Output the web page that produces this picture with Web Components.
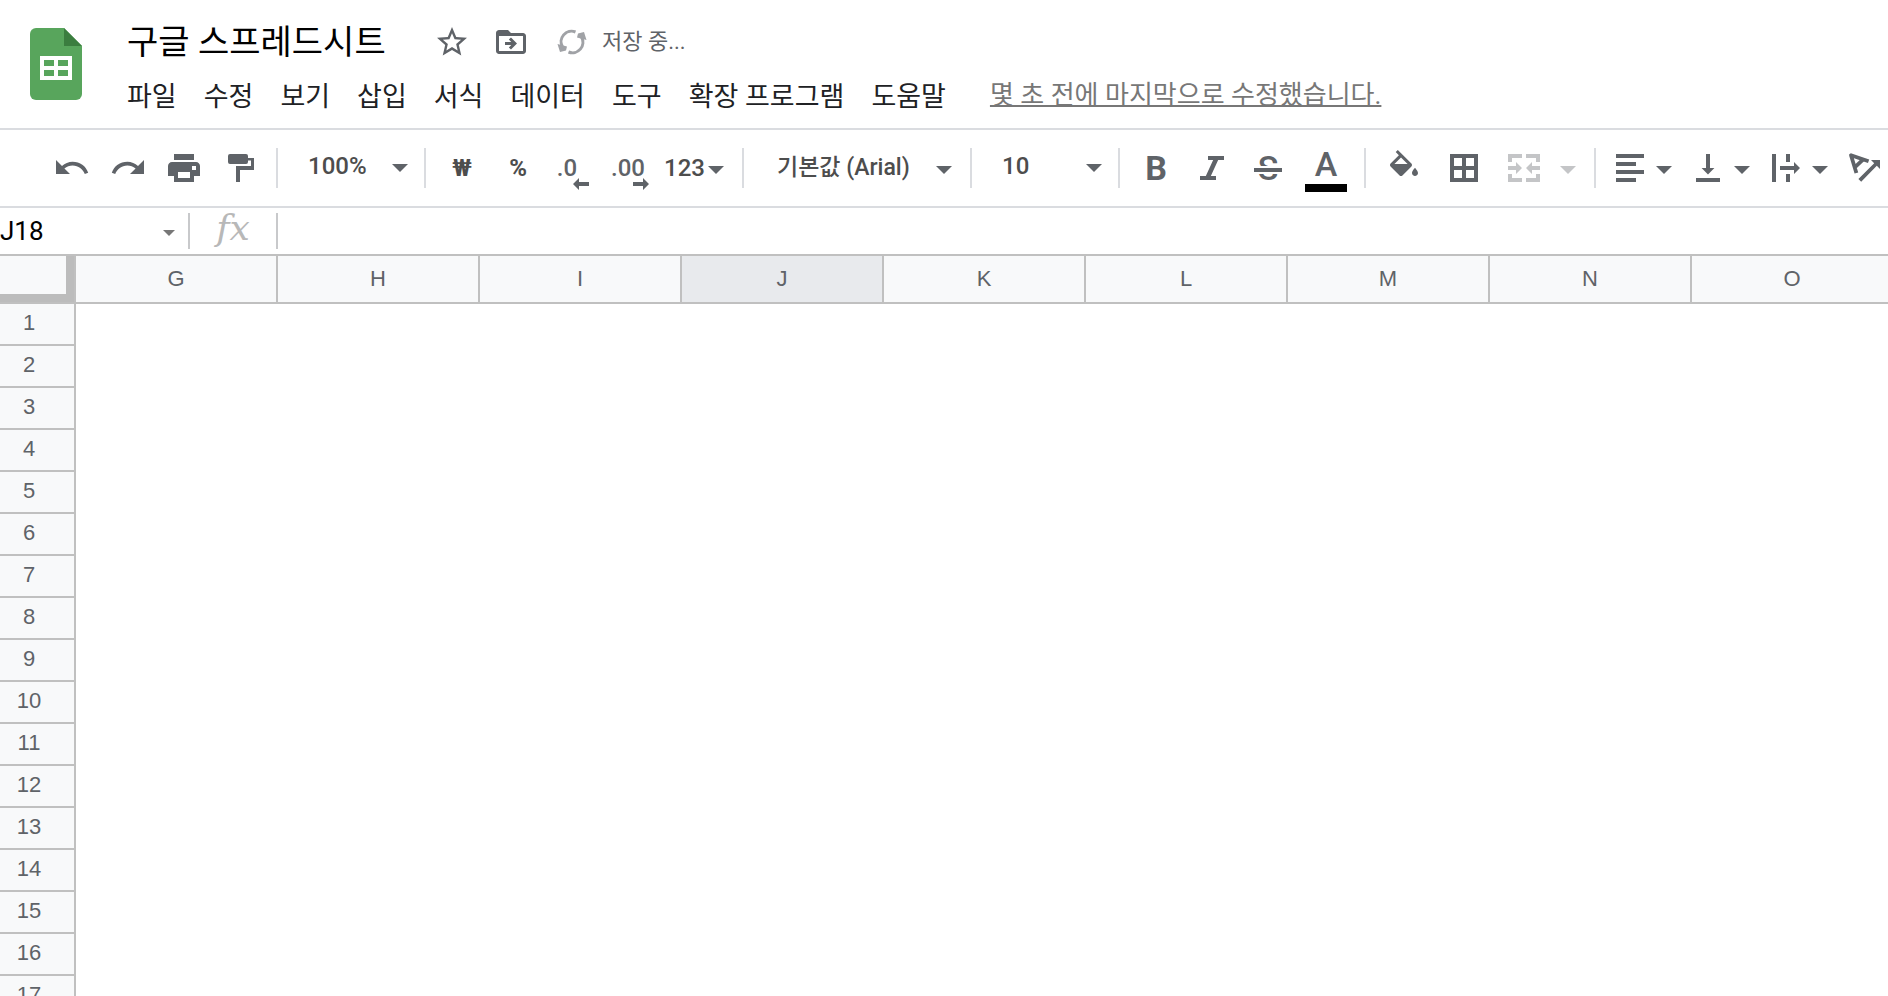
<!DOCTYPE html>
<html lang="ko">
<head>
<meta charset="utf-8">
<title>구글 스프레드시트</title>
<style>
  html, body { height: 100%; margin: 0; }
  body { background: #fff; overflow: hidden; font-family: Roboto, "Noto Sans CJK KR", sans-serif; }
</style>
</head>
<body>
<spreadsheet-app></spreadsheet-app>
<script>
const define = (name, html, setup) => {
  const template = document.createElement('template');
  template.innerHTML = html;
  customElements.define(name, class extends HTMLElement {
    connectedCallback() {
      if (this.shadowRoot) return;
      this.attachShadow({ mode: 'open' }).append(template.content.cloneNode(true));
      if (setup) setup(this, this.shadowRoot);
    }
  });
};

/* Icons: [viewBox size, markup] */
const ICONS = {
  undo: [18, '<path d="M9.3 5.9c-2 0-3.9.8-5.3 2.1L1 5v7h7L5.2 9.2c1.2-.9 2.6-1.5 4.1-1.5 2.9 0 5.2 1.8 6.1 4.3l1.7-.6C16 8.1 13 5.9 9.3 5.9z"/>'],
  redo: [18, '<path d="M8.7 5.9c2 0 3.9.8 5.3 2.1l3-3v7h-7l2.8-2.8c-1.2-.9-2.6-1.5-4.1-1.5-2.9 0-5.2 1.8-6.1 4.3l-1.7-.6C2 8.1 5 5.9 8.7 5.9z"/>'],
  print: [18, '<path fill-rule="evenodd" d="M4 2h10v3H4zM15 6H3C1.9 6 1 6.9 1 8v5h3v3h10v-3h3V8c0-1.1-.9-2-2-2zM12 14H6v-3h6zM15 10h-2V8h2z"/>'],
  paint: [18, '<path d="M12 2H4a1 1 0 0 0-1 1v3a1 1 0 0 0 1 1h8a1 1 0 0 0 1-1V5.2h1.5V8H7v8h2v-6h7V4h-3V3a1 1 0 0 0-1-1z"/>'],
  italic: [18, '<path d="M7 3v2h2.58l-3.66 8H3v2h8v-2H8.42l3.66-8H15V3z"/>'],
  fill: [18, '<path d="M14.5 8.87S13 10.49 13 11.5c0 .83.67 1.5 1.5 1.5s1.5-.67 1.5-1.5c0-.99-1.5-2.63-1.5-2.63zm-1.79-2.08L5.91 0 4.85 1.06l1.59 1.59-4.15 4.14c-.39.39-.39 1.02 0 1.41l4.5 4.5c.2.2.45.3.71.3s.51-.1.71-.29l4.5-4.5c.39-.39.39-1.03 0-1.42zM4.21 7L7.5 3.71 10.79 7H4.21z"/>'],
  borders: [18, '<path fill-rule="evenodd" d="M2 2h14v14H2zM4 4v4h4V4zM10 4v4h4V4zM4 10v4h4v-4zM10 10v4h4v-4z"/>'],
  merge: [18, '<path d="M1 2h7v2H3v2H1zM10 2h7v4h-2V4h-5zM1 12h2v2h5v2H1zM15 12h2v4h-7v-2h5zM1 8h4V6l3 3-3 3v-2H1zM17 8h-4V6l-3 3 3 3v-2h4z"/>'],
  align: [18, '<path d="M2 2h14v2H2zM2 6h10v2H2zM2 10h14v2H2zM2 14h10v2H2z"/>'],
  valign: [18, '<path d="M8 2v7H5.8L9 12.2 12.2 9H10V2zM3 14h12v2H3z"/>'],
  wrap: [18, '<path d="M2 2h2v14H2zM9 2h2v4H9zM9 12h2v4H9zM6 8h7V6l3 3-3 3v-2H6z"/>'],
  rotate: [18, '<path d="M5.2 11.5L2.5 2.6l8.8 3M4.5 8.6l4-3.800" fill="none" stroke="currentColor" stroke-width="1.9" stroke-linejoin="round"/><path d="M12.5 5H17v4.5l-1.6-1.6-7.8 8L6.2 14.5l7.9-7.9z"/>'],
  star: [24, '<path d="M22 9.24l-7.19-.62L12 2 9.19 8.63 2 9.24l5.46 4.73L5.82 21 12 17.27 18.18 21l-1.63-7.03L22 9.24zM12 15.4l-3.76 2.27 1-4.28-3.32-2.88 4.38-.38L12 6.1l1.71 4.04 4.38.38-3.32 2.88 1 4.28L12 15.4z"/>'],
  move: [24, '<path d="M20 6h-8l-2-2H4c-1.1 0-2 .9-2 2v12c0 1.1.9 2 2 2h16c1.1 0 2-.9 2-2V8c0-1.1-.9-2-2-2zm0 12H4V8h16v10zm-7.84-6H8v2h4.16l-1.59 1.59L11.99 17 16 13.01 11.99 9l-1.41 1.41L12.16 12z"/>'],
  sync: [36, '<path d="M21.5 8A10.5 10.5 0 0 0 8.5 23M14.5 28A10.5 10.5 0 0 0 27.5 13" fill="none" stroke="currentColor" stroke-width="3"/><path d="M3.5 20l9.5 2.5-1 4-6 1.5zM32.5 16l-9.5-2.5 1-4 6-1.5z"/>'],
  caret: [16, '<path d="M0 4h16L8 12z"/>'],
  left: [16, '<path d="M0 8l6-6v4h10v4H6v4z"/>'],
  right: [16, '<path d="M16 8l-6-6v4H0v4h10v4z"/>']
};

define('ui-icon', `<style>
  :host { display: block; flex: none; width: 36px; height: 36px; }
  :host([size="16"]) { width: 16px; height: 16px; }
  :host([size="12"]) { width: 12px; height: 12px; }
  svg { display: block; width: 100%; height: 100%; fill: currentColor; }
</style><svg aria-hidden="true"></svg>`, (el, root) => {
  const [size, markup] = ICONS[el.getAttribute('name')];
  const svg = root.querySelector('svg');
  svg.setAttribute('viewBox', `0 0 ${size} ${size}`);
  svg.innerHTML = markup;
});

define('tool-button', `<style>
  :host { display: block; flex: none; width: 56px; color: #5f6368; }
  :host([wide]) { width: 60px; }
  button { all: unset; box-sizing: border-box; width: 100%; height: 56px; display: flex; align-items: center; justify-content: center;
    font: 500 24px/28px Roboto, "Noto Sans CJK KR", sans-serif; }
</style><button type="button"><slot></slot></button>`, (el, root) =>
  root.querySelector('button').setAttribute('aria-label', el.getAttribute('label')));

define('menu-button', `<style>
  :host { display: block; flex: none; color: #5f6368; }
  :host([disabled]) { color: #c4c5c7; }
  button { all: unset; box-sizing: border-box; height: 56px; display: flex; align-items: center; gap: 8px; padding: 0 10px 0 8px;
    font: 500 24px/28px Roboto, sans-serif; }
  :host([disabled]) button { gap: 18px; padding: 0 10px 0 12px; }
  :host([text]) button { width: 76px; gap: 3px; padding: 0 0 0 6px; }
  ui-icon { padding-top: 4px; }
</style><button type="button"><slot></slot><ui-icon name="caret" size="16"></ui-icon></button>`, (el, root) => {
  const button = root.querySelector('button');
  button.setAttribute('aria-label', el.getAttribute('label'));
  button.disabled = el.hasAttribute('disabled');
});

define('tool-select', `<style>
  :host { display: grid; flex: none; width: 130px; color: #4d4d4d; align-items: center; padding-bottom: 4px; box-sizing: border-box; }
  :host([wide]) { width: 210px; padding-bottom: 0; }
  select { all: unset; grid-area: 1 / 1; box-sizing: border-box; width: 100%; height: 40px; padding-left: 22px; white-space: nowrap;
    font: 500 24px/40px Roboto, "Noto Sans CJK KR", sans-serif; }
  :host([wide]) select { height: 42px; padding-left: 25px; font-size: 23px; line-height: 42px; }
  ui-icon { grid-area: 1 / 1; justify-self: end; margin-right: 8px; padding-top: 4px; color: #5f6368; pointer-events: none; }
  :host([wide]) ui-icon { margin-right: 10px; }
</style><select></select><ui-icon name="caret" size="16"></ui-icon>`, (el, root) => {
  const select = root.querySelector('select');
  select.setAttribute('aria-label', el.getAttribute('label'));
  select.append(new Option(el.getAttribute('value')));
});

define('tool-separator', `<style>
  :host { display: block; flex: none; width: 2px; height: 40px; margin: 0 8px; background: #dadce0; }
</style>`);

define('sheets-logo', `<style>:host { display: block; flex: none; width: 52px; height: 72px; } svg { display: block; }</style>
<svg width="52" height="72" viewBox="0 0 52 72" role="img" aria-label="Sheets">
  <path fill="#58a55c" d="M6 0h28l18 18v48a6 6 0 0 1-6 6H6a6 6 0 0 1-6-6V6a6 6 0 0 1 6-6z"/>
  <path fill="#3b7d3f" d="M34 0l18 18H34z"/>
  <path fill="#fff" fill-rule="evenodd" d="M10 28h32v24H10zM14 32v6h10v-6zM28 32v6h10v-6zM14 42v6h10v-6zM28 42v6h10v-6z"/>
</svg>`);

define('document-header', `<style>
  :host { display: flex; align-items: flex-start; flex: none; box-sizing: border-box; height: 130px; padding: 0 30px; gap: 44px;
    border-bottom: 2px solid #dadce0; white-space: nowrap; }
  sheets-logo { margin-top: 28px; }
  .lines { display: flex; flex-direction: column; padding-top: 20px; }
  .top { display: flex; align-items: center; height: 44px; }
  h1 { margin: 0; padding-left: 1px; width: 307px; font-size: 34px; line-height: 44px; font-weight: 400; color: #000; }
  .actions { display: flex; gap: 3px; margin-left: -10px; color: #5f6368; }
  .saving { display: flex; align-items: center; gap: 12px; margin-left: 15px; font-size: 22px; line-height: 32px; color: #5f6368; }
  .saving ui-icon { color: #a0a2a6; }
  .bottom { display: flex; align-items: center; height: 62px; gap: 44px; }
  nav { display: flex; gap: 27px; padding: 4px 0 0 1px; }
  nav button { all: unset; font-size: 27px; line-height: 40px; color: #202124; }
  a { font-size: 26px; line-height: 36px; color: #777; text-decoration: underline 2px; text-decoration-skip-ink: none; }
</style>
<sheets-logo></sheets-logo>
<div class="lines">
  <div class="top">
    <h1>구글 스프레드시트</h1>
    <div class="actions">
      <tool-button label="별표"><ui-icon name="star"></ui-icon></tool-button>
      <tool-button label="이동"><ui-icon name="move"></ui-icon></tool-button>
    </div>
    <div class="saving" role="status"><ui-icon name="sync"></ui-icon><span>저장 중...</span></div>
  </div>
  <div class="bottom">
    <nav></nav>
    <a href="#history">몇 초 전에 마지막으로 수정했습니다.</a>
  </div>
</div>`, (el, root) => {
  for (const name of ['파일', '수정', '보기', '삽입', '서식', '데이터', '도구', '확장 프로그램', '도움말']) {
    const button = document.createElement('button');
    button.type = 'button';
    button.textContent = name;
    root.querySelector('nav').append(button);
  }
});

define('format-toolbar', `<style>
  :host { display: flex; align-items: center; flex: none; box-sizing: border-box; height: 78px; padding-left: 44px;
    border-bottom: 2px solid #dadce0; overflow: hidden; }
  .dark { color: #4d4d4d; }
  .decimal { position: relative; padding-right: 14px; }
  .decimal ui-icon { position: absolute; right: 2px; bottom: -10px; }
  .places { padding-right: 4px; }
  .places ui-icon { right: 0; }
  .glyph { font-size: 34px; line-height: 36px; }
  .bold { font-weight: 700; }
  .strike { position: relative; font-weight: 500; }
  .strike::after { content: ""; position: absolute; left: -4px; right: -4px; top: 16px; height: 4px; background: #5f6368;
    border: solid #fff; border-width: 2px 0; background-clip: padding-box; }
  .color { display: flex; flex-direction: column; align-items: center; width: 42px; height: 40px; border-bottom: 8px solid #000; line-height: 40px; }
</style>
<tool-button label="실행취소"><ui-icon name="undo"></ui-icon></tool-button>
<tool-button label="재실행"><ui-icon name="redo"></ui-icon></tool-button>
<tool-button label="인쇄"><ui-icon name="print"></ui-icon></tool-button>
<tool-button label="서식 복사"><ui-icon name="paint"></ui-icon></tool-button>
<tool-separator></tool-separator>
<tool-select label="확대/축소" value="100%"></tool-select>
<tool-separator></tool-separator>
<tool-button class="dark" label="통화 형식"><b>₩</b></tool-button>
<tool-button class="dark" label="퍼센트 형식"><b>%</b></tool-button>
<tool-button label="소수점 이하 자릿수 감소"><span class="decimal">.0<ui-icon name="left" size="16"></ui-icon></span></tool-button>
<tool-button label="소수점 이하 자릿수 증가"><span class="decimal places">.00<ui-icon name="right" size="16"></ui-icon></span></tool-button>
<menu-button text label="추가 형식"><span class="dark">123</span></menu-button>
<tool-separator></tool-separator>
<tool-select wide label="글꼴" value="기본값 (Arial)"></tool-select>
<tool-separator></tool-separator>
<tool-select label="글꼴 크기" value="10"></tool-select>
<tool-separator></tool-separator>
<tool-button label="굵게"><span class="glyph bold">B</span></tool-button>
<tool-button label="기울임꼴"><ui-icon name="italic"></ui-icon></tool-button>
<tool-button label="취소선"><span class="glyph strike">S</span></tool-button>
<tool-button wide label="텍스트 색상"><span class="glyph color">A</span></tool-button>
<tool-separator></tool-separator>
<tool-button wide label="채우기 색상"><ui-icon name="fill"></ui-icon></tool-button>
<tool-button wide label="테두리"><ui-icon name="borders"></ui-icon></tool-button>
<menu-button disabled label="셀 병합"><ui-icon name="merge"></ui-icon></menu-button>
<tool-separator></tool-separator>
<menu-button label="가로 맞춤"><ui-icon name="align"></ui-icon></menu-button>
<menu-button label="세로 맞춤"><ui-icon name="valign"></ui-icon></menu-button>
<menu-button label="텍스트 줄바꿈"><ui-icon name="wrap"></ui-icon></menu-button>
<menu-button label="텍스트 회전"><ui-icon name="rotate"></ui-icon></menu-button>`);

define('formula-bar', `<style>
  :host { display: flex; align-items: center; flex: none; box-sizing: border-box; height: 48px; border-bottom: 2px solid #c0c0c0; }
  input { all: unset; box-sizing: border-box; min-width: 0; height: 40px; font: 400 26px/40px Roboto, sans-serif; color: #000; }
  .name { width: 163px; }
  .formula { flex: 1; padding: 0 12px; }
  .rule { width: 2px; height: 36px; background: #c8c9cb; }
  .caret { width: 25px; padding-top: 4px; color: #777; }
  .fx { width: 86px; padding-bottom: 6px; text-align: center; font: italic 400 36px/36px "DejaVu Serif", serif; color: #b8b8b8; }
</style>
<input class="name" aria-label="이름 상자" value="J18">
<div class="caret"><ui-icon name="caret" size="12"></ui-icon></div>
<div class="rule"></div>
<div class="fx">fx</div>
<div class="rule"></div>
<input class="formula" aria-label="수식 입력줄">`);

define('sheet-grid', `<style>
  :host { display: block; flex: 1; min-height: 0; overflow: hidden; }
  table { table-layout: fixed; width: 0; border-collapse: separate; border-spacing: 0; }
  th, td { box-sizing: border-box; padding: 0; }
  th { background: #f8f9fa; border: solid #c0c0c0; border-width: 0 2px 2px 0; font: 400 22px/28px "Liberation Sans", sans-serif; color: #5f6368; }
  thead th { width: 202px; height: 48px; }
  thead th.active { background: #e8eaed; }
  thead .corner { width: 76px; box-shadow: inset -8px -8px #bcbcbc; }
  tbody th { height: 42px; padding: 0 16px 2px 0; }
</style>
<table><thead><tr></tr></thead><tbody></tbody></table>`, (el, root) => {
  const columns = [...'GHIJKLMNO'];
  const head = root.querySelector('thead tr');
  head.innerHTML = '<th class="corner"></th>' + columns.map(c => `<th scope="col"${c === 'J' ? ' class="active"' : ''}>${c}</th>`).join('');
  root.querySelector('tbody').innerHTML = Array.from({ length: 17 }, (_, i) =>
    `<tr><th scope="row">${i + 1}</th>${'<td></td>'.repeat(columns.length)}</tr>`).join('');
});

define('spreadsheet-app', `<style>
  :host { display: flex; flex-direction: column; height: 100%; }
</style>
<document-header></document-header>
<format-toolbar></format-toolbar>
<formula-bar></formula-bar>
<sheet-grid></sheet-grid>`);
</script>
</body>
</html>
